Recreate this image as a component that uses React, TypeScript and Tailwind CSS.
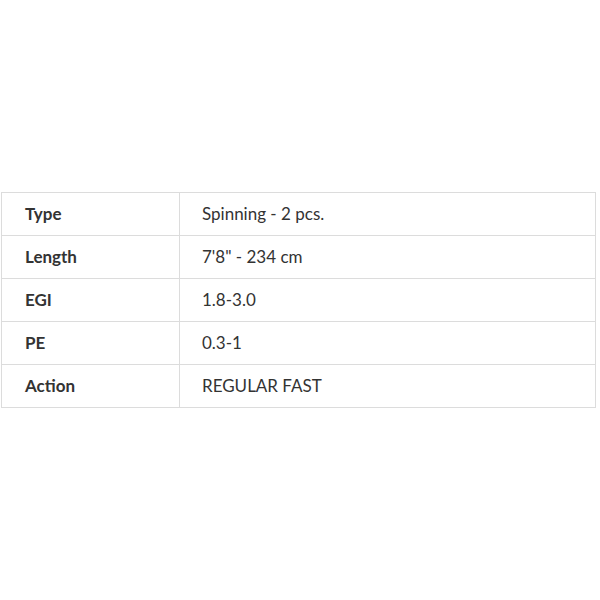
const specs = [
  { label: 'Type', value: 'Spinning - 2 pcs.' },
  { label: 'Length', value: '7\'8" - 234 cm' },
  { label: 'EGI', value: '1.8-3.0' },
  { label: 'PE', value: '0.3-1' },
  { label: 'Action', value: 'REGULAR FAST' },
];

export default function App() {
  return (
    <div className="w-[600px] h-[600px] bg-white pt-[192px] pl-px font-['Lato',sans-serif] text-[#333]">
      <table className="w-[595px] border-collapse text-[17px]">
        <tbody>
          {specs.map((row) => (
            <tr key={row.label} className="h-[43px]">
              <td className="w-[178px] border border-[#dcdcdc] pl-[23px] font-bold">{row.label}</td>
              <td className="border border-[#dcdcdc] pl-[22px]">{row.value}</td>
            </tr>
          ))}
        </tbody>
      </table>
    </div>
  );
}
